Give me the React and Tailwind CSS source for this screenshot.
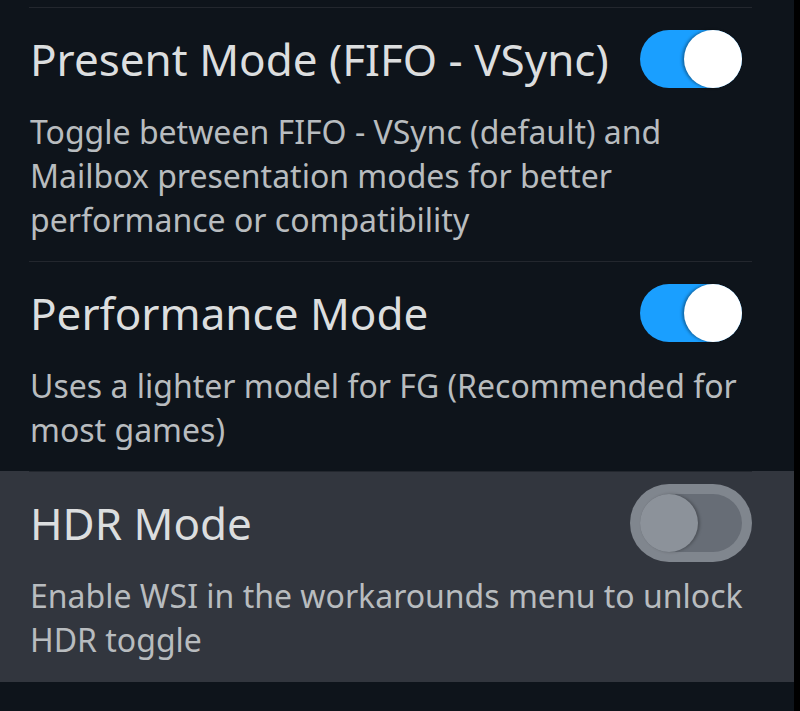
import React from "react";

function Toggle({ on, focused }) {
  if (on) {
    return (
      <div className="flex h-[58px] w-[102px] shrink-0 items-center justify-end rounded-full bg-[#1a9fff]">
        <div className="h-[58px] w-[58px] rounded-full bg-white shadow-[-2px_0_3px_rgba(0,0,0,0.35)]" />
      </div>
    );
  }
  return (
    <div
      className={
        "flex h-[58px] w-[102px] shrink-0 items-center justify-start rounded-full bg-[#676d76] " +
        (focused ? "ring-[10px] ring-[#80868e]" : "")
      }
    >
      <div className="h-[58px] w-[58px] rounded-full bg-[#8c929a] shadow-[2px_0_3px_rgba(0,0,0,0.25)]" />
    </div>
  );
}

function Row({ title, lines, on, focused, pb = "pb-[19px]" }) {
  return (
    <div className={focused ? "w-full bg-[#32363e]" : "w-full"}>
      <div className={"ml-[29px] mr-[42px] border-t border-[#23272e] pt-[25px] " + pb}>
        <div className="flex h-[52px] items-center justify-between pl-[1px] pr-[10px]">
          <div className="text-[44px] leading-[52px] text-[#dcdedf] whitespace-nowrap">{title}</div>
          <Toggle on={on} focused={focused} />
        </div>
        <div className="mt-[25px] pl-[1px] text-[32px] leading-[44px] text-[#b8bcbf]">
          {lines.map((l, i) => (
            <div key={i} className="whitespace-nowrap">
              {l}
            </div>
          ))}
        </div>
      </div>
    </div>
  );
}

export default function App() {
  return (
    <div
      className="flex h-[711px] w-[800px] overflow-hidden bg-black"
      style={{ fontFamily: '"Noto Sans", "Open Sans", sans-serif' }}
    >
      <div className="h-full w-[794px] bg-[#0e141b] pt-[7px]">
        <Row
          title="Present Mode (FIFO - VSync)"
          on
          lines={[
            "Toggle between FIFO - VSync (default) and",
            "Mailbox presentation modes for better",
            "performance or compatibility",
          ]}
        />
        <Row
          title="Performance Mode"
          on
          lines={["Uses a lighter model for FG (Recommended for", "most games)"]}
        />
        <Row
          title="HDR Mode"
          focused
          pb="pb-[20px]"
          lines={["Enable WSI in the workarounds menu to unlock", "HDR toggle"]}
        />
      </div>
      <div className="h-full w-[6px] bg-black" />
    </div>
  );
}
